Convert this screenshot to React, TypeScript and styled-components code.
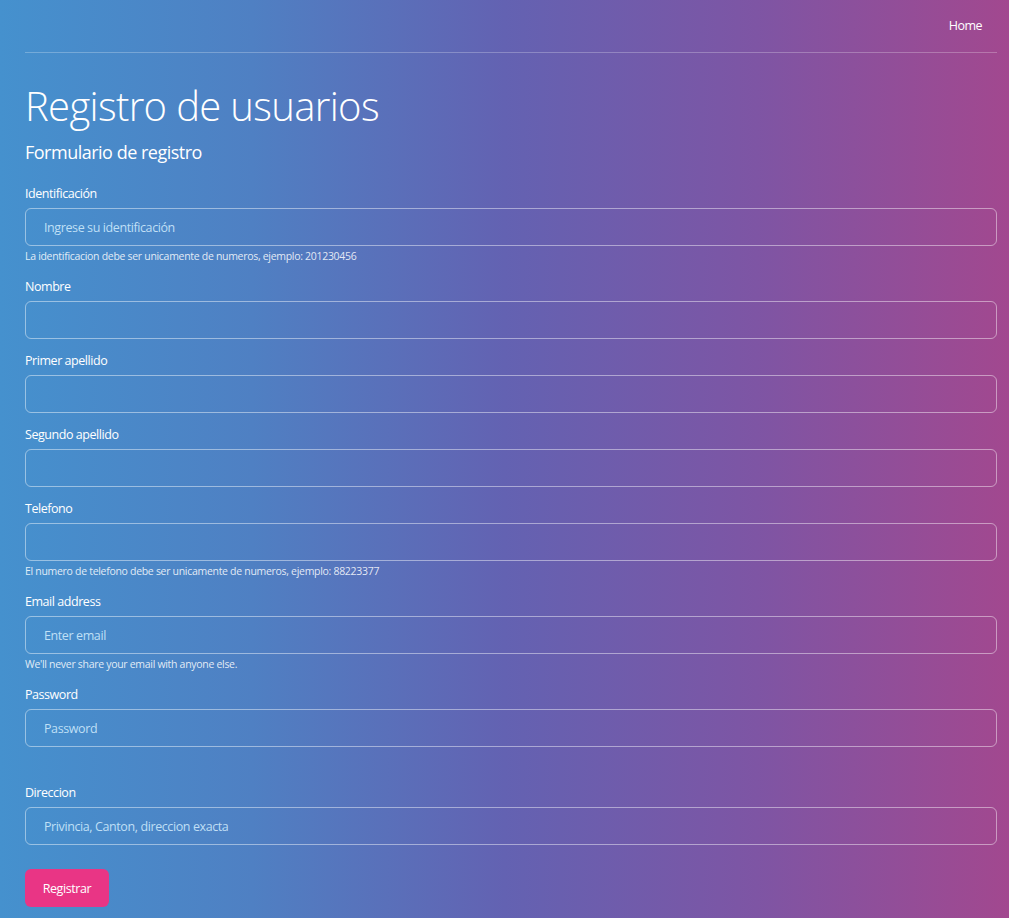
import React from "react";
import styled, { createGlobalStyle } from "styled-components";

const Global = createGlobalStyle`
  html, body { margin: 0; padding: 0; }
  body {
    min-height: 918px;
    font-family: "Open Sans", "Noto Sans", sans-serif;
    color: #fff;
    background: linear-gradient(to right, #4591ce 0%, #4f80c3 25%, #6362b2 50%, #7e55a4 75%, #a2488f 100%);
    background-attachment: fixed;
  }
  * { box-sizing: border-box; }
`;

const Page = styled.div`
  padding: 0 12px 0 25px;
  min-height: 918px;
`;

const Nav = styled.nav`
  display: flex;
  justify-content: flex-end;
  align-items: center;
  height: 53px;
  padding: 0 15px 2px 0;
  border-bottom: 1px solid rgba(255, 255, 255, 0.25);
`;

const NavLink = styled.a`
  font-size: 12.5px;
  letter-spacing: -0.5px;
  color: #fff;
  text-decoration: none;
`;

const Title = styled.h1`
  margin: 27px 0 0;
  font-size: 40px;
  font-weight: 300;
  line-height: 52px;
  letter-spacing: -0.65px;
`;

const Subtitle = styled.h2`
  margin: 8px 0 0;
  font-size: 18px;
  font-weight: 400;
  line-height: 24px;
  letter-spacing: -0.5px;
`;

const Form = styled.form`
  margin-top: 20px;
  display: flex;
  flex-direction: column;
`;

const Group = styled.div<{ $extra?: number }>`
  display: flex;
  flex-direction: column;
  margin-bottom: ${(p) => 12 + (p.$extra ?? 0)}px;
`;

const Label = styled.label`
  font-size: 12.5px;
  line-height: 19px;
  letter-spacing: -0.45px;
  margin-bottom: 5px;
`;

const Input = styled.input`
  height: 38px;
  width: 100%;
  padding: 0 18px;
  border: 1px solid rgba(255, 255, 255, 0.45);
  border-radius: 6px;
  background: transparent;
  color: #fff;
  font-family: inherit;
  font-size: 12.5px;
  letter-spacing: -0.4px;
  outline: none;
  &::placeholder {
    color: rgba(215, 240, 255, 0.85);
  }
`;

const Help = styled.small`
  display: block;
  margin: 2px 0 1px;
  font-size: 10.5px;
  line-height: 16px;
  letter-spacing: -0.3px;
  color: rgba(255, 255, 255, 0.85);
`;

const Button = styled.button`
  margin-top: 12px;
  align-self: flex-start;
  height: 38px;
  width: 84px;
  border: none;
  border-radius: 6px;
  background: #e93585;
  color: #fff;
  font-family: inherit;
  font-size: 12.5px;
  letter-spacing: -0.4px;
  cursor: pointer;
`;

type Field = {
  label: string;
  type?: string;
  placeholder?: string;
  help?: string;
  extra?: number;
};

const fields: Field[] = [
  {
    label: "Identificación",
    placeholder: "Ingrese su identificación",
    help: "La identificacion debe ser unicamente de numeros, ejemplo: 201230456",
  },
  { label: "Nombre" },
  { label: "Primer apellido" },
  { label: "Segundo apellido" },
  {
    label: "Telefono",
    help: "El numero de telefono debe ser unicamente de numeros, ejemplo: 88223377",
  },
  {
    label: "Email address",
    type: "email",
    placeholder: "Enter email",
    help: "We'll never share your email with anyone else.",
  },
  { label: "Password", type: "password", placeholder: "Password", extra: 24 },
  { label: "Direccion", placeholder: "Privincia, Canton, direccion exacta" },
];

export default function App() {
  return (
    <>
      <Global />
      <Page>
        <Nav>
          <NavLink href="#">Home</NavLink>
        </Nav>
        <Title>Registro de usuarios</Title>
        <Subtitle>Formulario de registro</Subtitle>
        <Form onSubmit={(e) => e.preventDefault()}>
          {fields.map((f) => (
            <Group key={f.label} $extra={f.extra}>
              <Label>{f.label}</Label>
              <Input type={f.type ?? "text"} placeholder={f.placeholder} />
              {f.help && <Help>{f.help}</Help>}
            </Group>
          ))}
          <Button type="submit">Registrar</Button>
        </Form>
      </Page>
    </>
  );
}
